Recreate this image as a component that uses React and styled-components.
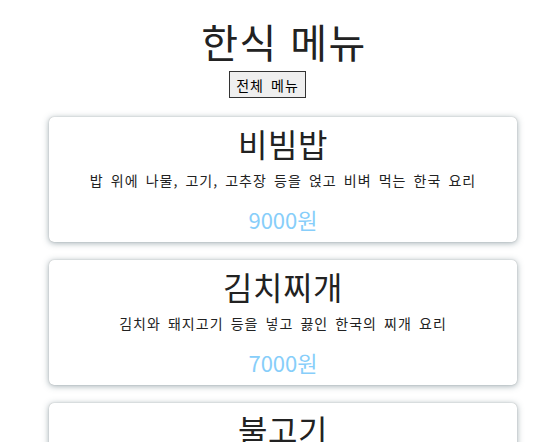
import React from "react";
import styled, { createGlobalStyle } from "styled-components";

const GlobalStyle = createGlobalStyle`
  body {
    margin: 0;
    background: #ffffff;
    font-family: "Noto Sans CJK KR", "Noto Sans", sans-serif;
    color: #222;
  }
`;

const Page = styled.div`
  padding: 16px 8px 0 8px;
  height: 442px;
  overflow: hidden;
  box-sizing: border-box;
`;

const Title = styled.h1`
  margin: 0;
  text-align: center;
  font-size: 40px;
  font-weight: 400;
  line-height: 50px;
  letter-spacing: 1.5px;
  word-spacing: 2px;
  padding-left: 25px;
`;

const ButtonRow = styled.div`
  display: flex;
  justify-content: center;
  margin-top: 5px;
  padding-right: 8px;
`;

const AllButton = styled.button`
  font-family: "Noto Sans CJK KR", sans-serif;
  font-size: 14px;
  line-height: 20px;
  height: 27px;
  padding: 1px 6px;
  letter-spacing: 1px;
  word-spacing: 3px;
  color: #000;
  background: #efefef;
  border: 1px solid #333;
  border-radius: 0;
`;

const List = styled.div`
  display: flex;
  flex-direction: column;
  gap: 18px;
  margin-top: 19px;
  margin-left: 41px;
  width: 468px;
`;

const Card = styled.div`
  background: #fff;
  border-radius: 5px;
  box-shadow: 0 1px 6px rgba(60, 85, 95, 0.5), 0 0 1px rgba(0, 0, 0, 0.3);
  padding: 8px 0;
  text-align: center;
`;

const Name = styled.h2`
  margin: 0;
  font-size: 32px;
  font-weight: 400;
  line-height: 36px;
  letter-spacing: 0.5px;
`;

const Desc = styled.p`
  margin: 9px 0 0;
  font-size: 14px;
  line-height: 20px;
  letter-spacing: 1px;
  word-spacing: 3px;
`;

const Price = styled.p`
  margin: 14px 0 0;
  font-size: 22px;
  line-height: 30px;
  color: #87cefa;
`;

const menus = [
  { name: "비빔밥", desc: "밥 위에 나물, 고기, 고추장 등을 얹고 비벼 먹는 한국 요리", price: 9000 },
  { name: "김치찌개", desc: "김치와 돼지고기 등을 넣고 끓인 한국의 찌개 요리", price: 7000 },
  { name: "불고기", desc: "얇게 썬 소고기를 양념에 재워 구운 한국 요리", price: 12000 },
];

export default function App() {
  return (
    <Page>
      <GlobalStyle />
      <Title>한식 메뉴</Title>
      <ButtonRow>
        <AllButton>전체 메뉴</AllButton>
      </ButtonRow>
      <List>
        {menus.map((m) => (
          <Card key={m.name}>
            <Name>{m.name}</Name>
            <Desc>{m.desc}</Desc>
            <Price>{m.price}원</Price>
          </Card>
        ))}
      </List>
    </Page>
  );
}
